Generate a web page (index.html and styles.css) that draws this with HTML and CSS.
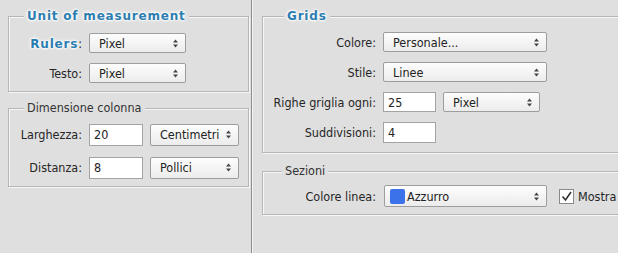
FILE: index.html
```html
<!DOCTYPE html>
<html lang="it">
<head>
    <meta charset="UTF-8">
    <title>Preferenze - Unità e righelli</title>
    <link rel="stylesheet" href="styles.css">
</head>
<body>

<div class="panel">
    <div class="col col-left">
        <fieldset class="group group-units">
            <legend class="title">Unit of measurement</legend>
            <div class="row">
                <label class="lbl"><span class="hl">Rulers</span>:</label>
                <div class="select w-97"><span>Pixel</span><svg class="arrows" width="5" height="9" viewBox="0 0 5 9"><path d="M0 3.5 L2.5 0.5 L5 3.5 Z M0 5.5 L2.5 8.5 L5 5.5 Z"/></svg></div>
            </div>
            <div class="row">
                <label class="lbl">Testo:</label>
                <div class="select w-97"><span>Pixel</span><svg class="arrows" width="5" height="9" viewBox="0 0 5 9"><path d="M0 3.5 L2.5 0.5 L5 3.5 Z M0 5.5 L2.5 8.5 L5 5.5 Z"/></svg></div>
            </div>
        </fieldset>

        <fieldset class="group group-cols">
            <legend>Dimensione colonna</legend>
            <div class="row">
                <label class="lbl">Larghezza:</label>
                <input class="field w-54" type="text" value="20">
                <div class="select tall w-89"><span>Centimetri</span><svg class="arrows" width="5" height="9" viewBox="0 0 5 9"><path d="M0 3.5 L2.5 0.5 L5 3.5 Z M0 5.5 L2.5 8.5 L5 5.5 Z"/></svg></div>
            </div>
            <div class="row">
                <label class="lbl">Distanza:</label>
                <input class="field w-54" type="text" value="8">
                <div class="select tall w-89"><span>Pollici</span><svg class="arrows" width="5" height="9" viewBox="0 0 5 9"><path d="M0 3.5 L2.5 0.5 L5 3.5 Z M0 5.5 L2.5 8.5 L5 5.5 Z"/></svg></div>
            </div>
        </fieldset>
    </div>

    <div class="col col-right">
        <fieldset class="group group-grids">
            <legend class="title">Grids</legend>
            <div class="row">
                <label class="lbl">Colore:</label>
                <div class="select w-164"><span>Personale...</span><svg class="arrows" width="5" height="9" viewBox="0 0 5 9"><path d="M0 3.5 L2.5 0.5 L5 3.5 Z M0 5.5 L2.5 8.5 L5 5.5 Z"/></svg></div>
            </div>
            <div class="row">
                <label class="lbl">Stile:</label>
                <div class="select w-164"><span>Linee</span><svg class="arrows" width="5" height="9" viewBox="0 0 5 9"><path d="M0 3.5 L2.5 0.5 L5 3.5 Z M0 5.5 L2.5 8.5 L5 5.5 Z"/></svg></div>
            </div>
            <div class="row">
                <label class="lbl">Righe griglia ogni:</label>
                <input class="field w-53" type="text" value="25">
                <div class="select w-97"><span>Pixel</span><svg class="arrows" width="5" height="9" viewBox="0 0 5 9"><path d="M0 3.5 L2.5 0.5 L5 3.5 Z M0 5.5 L2.5 8.5 L5 5.5 Z"/></svg></div>
            </div>
            <div class="row">
                <label class="lbl">Suddivisioni:</label>
                <input class="field w-53 h-21" type="text" value="4">
            </div>
        </fieldset>

        <fieldset class="group group-slices">
            <legend>Sezioni</legend>
            <div class="row">
                <label class="lbl">Colore linea:</label>
                <div class="select tall w-163">
                    <i class="swatch"></i><span>Azzurro</span>
                    <svg class="arrows" width="5" height="9" viewBox="0 0 5 9"><path d="M0 3.5 L2.5 0.5 L5 3.5 Z M0 5.5 L2.5 8.5 L5 5.5 Z"/></svg>
                </div>
                <label class="check">
                    <span class="box"><svg width="13" height="13" viewBox="0 0 13 13"><path d="M2.5 6.5 L5.5 10 L11 2" fill="none" stroke="#333" stroke-width="1.6"/></svg></span>
                    Mostra
                </label>
            </div>
        </fieldset>
    </div>
</div>

</body>
</html>
```

FILE: styles.css
```css
body {
    margin: 0;
    background: #dfdfdf;
    font-family: "DejaVu Sans Condensed", "DejaVu Sans", sans-serif;
    font-size: 12.5px;
    color: #262626;
    overflow: hidden;
    height: 253px;
}

.panel {
    display: flex;
    height: 253px;
}

.col {
    box-sizing: border-box;
    padding-top: 8px;
}

.col-left {
    width: 252px;
    flex: none;
    padding-left: 8px;
    padding-right: 2px;
    border-right: 1px solid #8e8e8e;
}

.col-right {
    flex: 1;
    min-width: 0;
    overflow: hidden;
    padding-left: 9px;
    border-left: 1px solid #f3f3f3;
}

/* etched group boxes */
.group {
    margin: 0;
    min-width: 0;
    border: 1px solid #b6b6b6;
    box-shadow: inset 1px 1px 0 #f7f7f7, 1px 1px 0 #f7f7f7;
}

.group legend {
    margin-left: 15px;
    padding: 0 3px;
    line-height: 16px;
    background: #dfdfdf;
    color: #333;
}

.col-right .group legend {
    margin-left: 19px;
}

.col-right .group legend.title {
    margin-left: 21px;
}

.group .title,
.hl {
    font-family: "DejaVu Sans", sans-serif;
    font-weight: bold;
    font-size: 12px;
    letter-spacing: 0.8px;
    color: #2c7db0;
    text-shadow: 0 0 2px #fff, 0 0 2px #fff, 0 0 3px #fff, 0 0 4px #fff;
}

.group-units {
    padding: 4px 0 3px;
}

.group-cols {
    margin-top: 8px;
    padding: 2px 0 2px;
}

.group-grids {
    margin-right: -80px;
    padding: 3px 0 5px;
}

.group-slices {
    margin-top: 10px;
    margin-right: -80px;
    padding: 2px 0 3px;
}

.row {
    display: flex;
    align-items: center;
    gap: 7px;
    height: 30px;
}

.group-cols .row {
    height: 33px;
}

.lbl {
    flex: none;
    width: 73px;
    text-align: right;
}

.col-right .lbl {
    width: 113px;
}

/* dropdowns */
.select {
    box-sizing: border-box;
    display: flex;
    align-items: center;
    height: 20px;
    padding: 0 7px 0 9px;
    border: 1px solid #9d9d9d;
    border-radius: 2px;
    background: linear-gradient(#fdfdfd, #ececec);
    color: #222;
    flex: none;
}

.select span {
    flex: 1;
}

.select .arrows {
    fill: #444;
}

.select.tall {
    height: 22px;
}

.field {
    box-sizing: border-box;
    height: 20px;
    padding: 0 4px;
    margin: 0;
    border: 1px solid #a3a3a3;
    background: #fff;
    font: inherit;
    color: #222;
    outline: none;
    flex: none;
}

.group-cols .field {
    height: 22px;
}

.w-53 { width: 53px; }
.w-54 { width: 54px; }
.w-89 { width: 89px; }
.w-97 { width: 97px; }
.w-163 { width: 163px; margin-left: 1px; }
.w-164 { width: 164px; }
.h-21 { height: 21px; }

.swatch {
    width: 15px;
    height: 15px;
    margin-left: -4px;
    margin-right: 2px;
    border-radius: 2px;
    background: #3b72ea;
}

.check {
    display: flex;
    align-items: center;
    gap: 4px;
    margin-left: 5px;
    white-space: nowrap;
}

.check .box {
    box-sizing: border-box;
    width: 15px;
    height: 15px;
    border: 1px solid #8a8a8a;
    background: #fff;
    display: flex;
}
```
